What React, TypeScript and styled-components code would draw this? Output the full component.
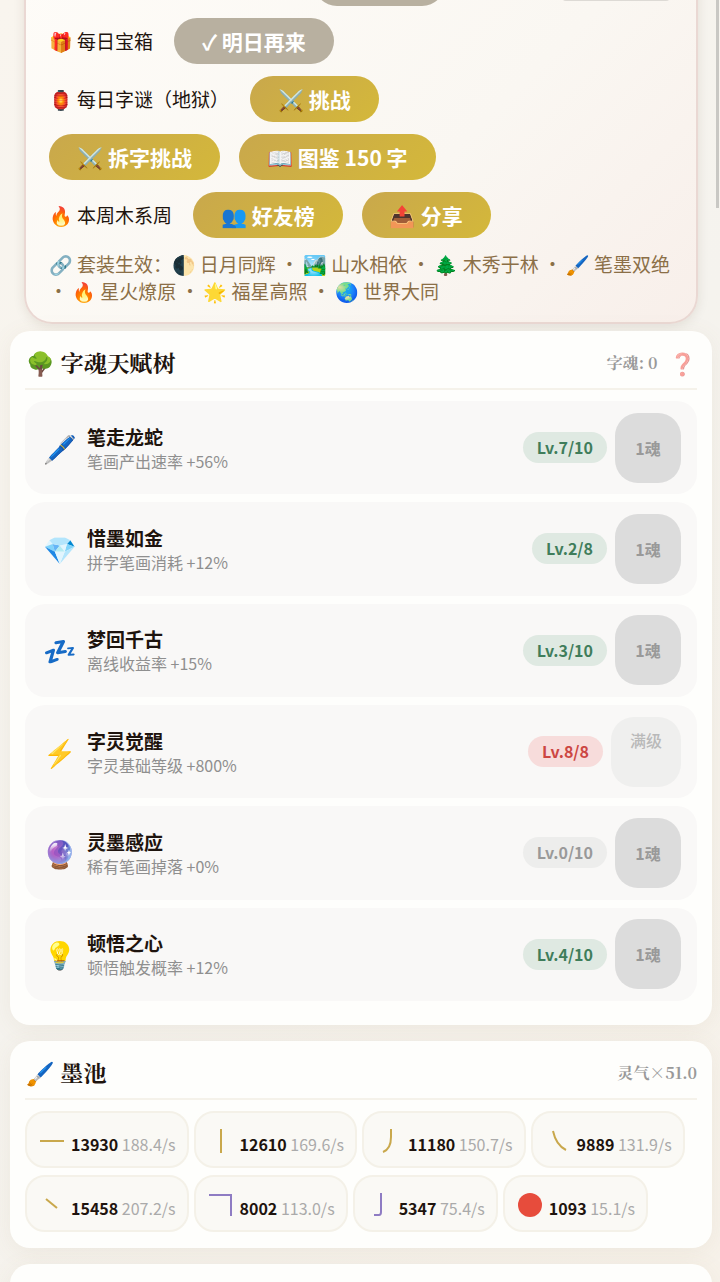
import React from "react";
import styled, { createGlobalStyle } from "styled-components";

const sans = `"Noto Sans CJK SC", "Noto Color Emoji", sans-serif`;
const serif = `"Noto Serif SC", "Noto Serif CJK SC", "Liberation Serif", "Noto Sans CJK SC", "Noto Color Emoji", serif`;

const GlobalStyle = createGlobalStyle`
  * { box-sizing: border-box; }
  body {
    margin: 0;
    background: #f7f3eb;
    color: #1e140e;
    font-family: ${sans};
  }
  button { font-family: inherit; border: 0; margin: 0; cursor: pointer; }
  h2, p, ul { margin: 0; padding: 0; }
  ul { list-style: none; }
`;

const Viewport = styled.div`
  position: relative;
  height: 100vh;
  overflow: hidden;
  background: linear-gradient(135deg, #f9f5ee, #f5f3ee 50%, #f7f2ea);
`;

const Page = styled.main`
  display: flex;
  flex-direction: column;
  gap: 16px;
  margin-top: -40px;
  padding: 0 8px 0 10px;
`;

const ScrollThumb = styled.div`
  position: absolute;
  top: 0;
  right: 1px;
  width: 3px;
  height: 208px;
  background: #c9c8c4;
`;

const DailyCard = styled.section`
  display: flex;
  flex-direction: column;
  gap: 12px;
  margin: 0 14px -9px;
  padding: 0 23px 18px;
  border: 2px solid #ead8d3;
  border-top: 0;
  border-radius: 0 0 28px 28px;
  background: linear-gradient(135deg, #fefcf8 0%, #faf7f2 60%, #f8efea 100%);
  box-shadow: 0 2px 12px rgba(60, 40, 20, 0.1);
`;

const DailyRow = styled.div`
  display: flex;
  align-items: center;
  gap: 19px;
  height: 46px;
`;

const DailyLabel = styled.span`
  margin-right: 2px;
  font-size: 19px;
  line-height: 28px;
  white-space: pre;
`;

const PillButton = styled.button<{ $muted?: boolean }>`
  height: 46px;
  padding: 0 28px;
  border-radius: 23px;
  background: ${(p) => (p.$muted ? "#b8b0a0" : "linear-gradient(135deg, #c9a84c, #d4b83a)")};
  color: #fff;
  font-size: 21px;
  font-weight: 700;
  line-height: 30px;
  white-space: nowrap;
`;

const ClippedPill = styled(PillButton)`
  width: 131px;
  margin-left: 265px;
`;

const ClippedField = styled.button`
  width: 108px;
  height: 41px;
  margin: 0 3px 5px auto;
  border-radius: 4px;
  background: #dddad5;
`;

const SetBonus = styled.p`
  color: #8b6f47;
  font-size: 19px;
  line-height: 27px;
`;

const Card = styled.section`
  padding: 16px 15px;
  border-radius: 20px;
  background: #fefefc;
  box-shadow: 0 4px 24px rgba(139, 111, 71, 0.08);
`;

const CardHeader = styled.header`
  display: flex;
  align-items: center;
  justify-content: space-between;
  height: 43px;
  padding-bottom: 9px;
  border-bottom: 2px solid #f5f2ea;
`;

const CardTitle = styled.h2`
  padding-left: 1px;
  font-family: ${serif};
  font-size: 23px;
  font-weight: 700;
  line-height: 34px;
`;

const CardMeta = styled.div`
  display: flex;
  align-items: center;
  gap: 12px;
  color: #999;
  font-family: ${serif};
  font-size: 16px;
  font-weight: 700;
  line-height: 24px;
`;

const HelpButton = styled.button`
  padding: 0;
  background: none;
  font-size: 22px;
  line-height: 30px;
  opacity: 0.5;
`;

const TalentList = styled.ul`
  display: grid;
  grid-auto-rows: 1fr;
  gap: 8px;
  min-height: 600px;
  margin: 11px 0 8px;
`;

const TalentRow = styled.li`
  display: flex;
  align-items: center;
  gap: 8px;
  padding: 0 16px;
  border-radius: 20px;
  background: #f9f8f7;
`;

const TalentIcon = styled.span`
  width: 38px;
  font-size: 27px;
  line-height: 36px;
  text-align: center;
`;

const TalentText = styled.div`
  flex: 1;
`;

const TalentName = styled.p`
  font-size: 19px;
  font-weight: 700;
  line-height: 26px;
`;

const TalentDesc = styled.p`
  color: #8f8f8f;
  font-size: 16px;
  line-height: 22px;
`;

type Tone = "green" | "red" | "gray";
const tones: Record<Tone, string> = {
  green: "background: #dfe9e2; color: #3f7d5b;",
  red: "background: #f7dcdb; color: #cc4642;",
  gray: "background: #ededec; color: #999;",
};

const LevelBadge = styled.span<{ $tone: Tone }>`
  padding: 0 14px;
  border-radius: 16px;
  font-size: 16px;
  font-weight: 700;
  line-height: 31px;
  ${(p) => tones[p.$tone]}
`;

const UpgradeButton = styled.button<{ $maxed?: boolean }>`
  display: flex;
  align-items: ${(p) => (p.$maxed ? "flex-start" : "center")};
  justify-content: center;
  width: ${(p) => (p.$maxed ? 70 : 66)}px;
  height: 70px;
  padding: ${(p) => (p.$maxed ? 11 : 0)}px 0;
  border-radius: 23px;
  background: ${(p) => (p.$maxed ? "#efefee" : "#dcdcdc")};
  color: ${(p) => (p.$maxed ? "#b9b9b9" : "#999")};
  font-size: 16px;
  font-weight: ${(p) => (p.$maxed ? 500 : 700)};
  line-height: 24px;
`;

const StrokeList = styled.ul`
  display: flex;
  flex-wrap: wrap;
  gap: 7px 5px;
  margin-top: 11px;
`;

const StrokeChip = styled.li`
  display: flex;
  align-items: center;
  height: 57px;
  padding: 0 11px 0 12px;
  border: 2px solid #f4f1e8;
  border-radius: 20px;
  background: #faf9f5;
  white-space: nowrap;
`;

const StrokeIcon = styled.svg`
  width: 26px;
  height: 26px;
  margin-right: 6px;
  fill: none;
  stroke-width: 2;
`;

const StrokeCount = styled.p`
  margin-top: 9px;
  color: #aaa;
  font-size: 16px;
  line-height: 24px;

  strong {
    color: #1e140e;
    font-weight: 700;
  }
`;

const NextCard = styled(Card)`
  height: 80px;
`;

const talents: { icon: string; name: string; desc: string; level: string; tone: Tone; maxed?: boolean }[] = [
  { icon: "🖊️", name: "笔走龙蛇", desc: "笔画产出速率 +56%", level: "Lv.7/10", tone: "green" },
  { icon: "💎", name: "惜墨如金", desc: "拼字笔画消耗 +12%", level: "Lv.2/8", tone: "green" },
  { icon: "💤", name: "梦回千古", desc: "离线收益率 +15%", level: "Lv.3/10", tone: "green" },
  { icon: "⚡", name: "字灵觉醒", desc: "字灵基础等级 +800%", level: "Lv.8/8", tone: "red", maxed: true },
  { icon: "🔮", name: "灵墨感应", desc: "稀有笔画掉落 +0%", level: "Lv.0/10", tone: "gray" },
  { icon: "💡", name: "顿悟之心", desc: "顿悟触发概率 +12%", level: "Lv.4/10", tone: "green" },
];

const gold = "#c9a84c";
const violet = "#8e7cc3";

const strokes = [
  { count: "13930", rate: "188.4/s", shape: <path d="M1 14H25" stroke={gold} /> },
  { count: "12610", rate: "169.6/s", shape: <path d="M13 2V26" stroke={gold} /> },
  { count: "11180", rate: "150.7/s", shape: <path d="M15 2V10Q15 22 7 25" stroke={gold} /> },
  { count: "9889", rate: "131.9/s", shape: <path d="M8 4Q11 18 21 23" stroke={gold} /> },
  { count: "15458", rate: "207.2/s", shape: <path d="M7 8L18 17" stroke={gold} /> },
  { count: "8002", rate: "113.0/s", shape: <path d="M1 4H23V25" stroke={violet} /> },
  { count: "5347", rate: "75.4/s", shape: <path d="M14 2V21Q14 24 12 24H7" stroke={violet} /> },
  { count: "1093", rate: "15.1/s", shape: <circle cx="13" cy="14" r="12" fill="#e74c3c" /> },
];

export default function App() {
  return (
    <Viewport>
      <GlobalStyle />
      <Page>
        <DailyCard>
          <DailyRow>
            <ClippedPill $muted aria-label="每日签到" />
            <ClippedField aria-label="设置" />
          </DailyRow>
          <DailyRow>
            <DailyLabel>🎁 每日宝箱</DailyLabel>
            <PillButton $muted>✓ 明日再来</PillButton>
          </DailyRow>
          <DailyRow>
            <DailyLabel>🏮 每日字谜（地狱）</DailyLabel>
            <PillButton>⚔️ 挑战</PillButton>
          </DailyRow>
          <DailyRow>
            <PillButton>⚔️ 拆字挑战</PillButton>
            <PillButton>📖 图鉴 150 字</PillButton>
          </DailyRow>
          <DailyRow>
            <DailyLabel>🔥 本周木系周</DailyLabel>
            <PillButton>👥 好友榜</PillButton>
            <PillButton>📤 分享</PillButton>
          </DailyRow>
          <SetBonus>
            🔗 套装生效：🌓 日月同辉 ・ 🏞️ 山水相依 ・ 🌲 木秀于林 ・ 🖌️ 笔墨双绝 ・ 🔥 星火燎原 ・ 🌟 福星高照 ・ 🌏 世界大同
          </SetBonus>
        </DailyCard>

        <Card>
          <CardHeader>
            <CardTitle>🌳 字魂天赋树</CardTitle>
            <CardMeta>
              <span>字魂: 0</span>
              <HelpButton aria-label="帮助">❓</HelpButton>
            </CardMeta>
          </CardHeader>
          <TalentList>
            {talents.map((t) => (
              <TalentRow key={t.name}>
                <TalentIcon>{t.icon}</TalentIcon>
                <TalentText>
                  <TalentName>{t.name}</TalentName>
                  <TalentDesc>{t.desc}</TalentDesc>
                </TalentText>
                <LevelBadge $tone={t.tone}>{t.level}</LevelBadge>
                <UpgradeButton $maxed={t.maxed} disabled>
                  {t.maxed ? "满级" : "1魂"}
                </UpgradeButton>
              </TalentRow>
            ))}
          </TalentList>
        </Card>

        <Card>
          <CardHeader>
            <CardTitle>🖌️ 墨池</CardTitle>
            <CardMeta>灵气×51.0</CardMeta>
          </CardHeader>
          <StrokeList>
            {strokes.map((s) => (
              <StrokeChip key={s.count}>
                <StrokeIcon viewBox="0 0 26 26">{s.shape}</StrokeIcon>
                <StrokeCount>
                  <strong>{s.count}</strong> {s.rate}
                </StrokeCount>
              </StrokeChip>
            ))}
          </StrokeList>
        </Card>

        <NextCard />
      </Page>
      <ScrollThumb />
    </Viewport>
  );
}
